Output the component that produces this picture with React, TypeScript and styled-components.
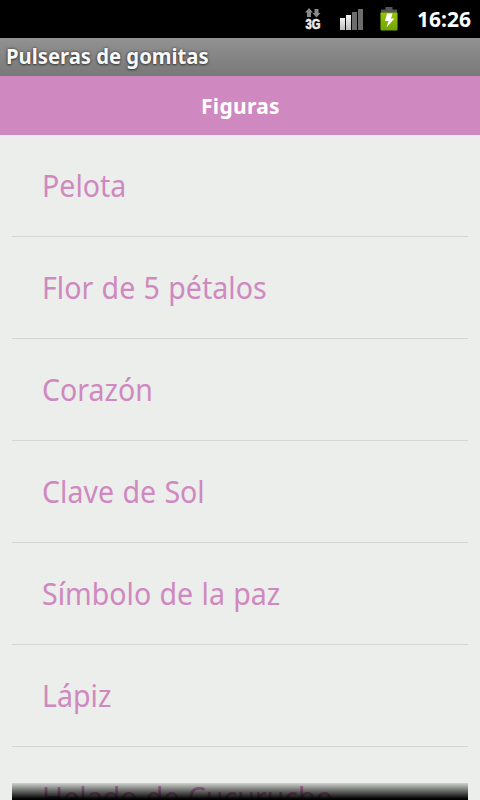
import React from "react";
import styled, { createGlobalStyle } from "styled-components";

const Global = createGlobalStyle`
  body { margin: 0; overflow: hidden; font-family: "Noto Sans", sans-serif; }
`;
const Screen = styled.main`
  position: relative; width: 480px; height: 800px; overflow: hidden; background: #ebeeea;
`;
const StatusBar = styled.div`
  height: 38px; background: #000; display: flex; align-items: center; justify-content: flex-end;
`;
const StatusIcons = styled.svg`
  width: 100px; height: 38px; display: block;
`;
const Clock = styled.time`
  color: #fff; font-size: 21px; font-weight: 700; line-height: 38px; width: 54px; margin: 0 9px 0 17px; white-space: nowrap;
`;
const TitleBar = styled.div`
  height: 38px; line-height: 37px; padding-left: 6px; box-sizing: border-box; font-size: 21px; font-weight: 700; color: #f8f8f8;
  background: linear-gradient(#929292, #787878); text-shadow: 0 0 3px #333, 0 1px 2px #444; white-space: nowrap;
`;
const Label = styled.span<{ $squeeze: number }>`
  display: inline-block; transform: scaleX(${(p) => p.$squeeze}); transform-origin: left center;
`;
const Heading = styled.h1`
  height: 59px; margin: 0; padding-left: 1px; background: #d088c0; color: #fff; font-size: 21px; line-height: 60px; text-align: center;
  letter-spacing: 0.3px;
`;
const List = styled.ul`
  list-style: none; margin: 0; padding: 0 12px;
`;
const Row = styled.li`
  height: 102px; box-sizing: border-box; border-bottom: 1px solid #d3d6d3; padding-left: 30px; line-height: 100px;
  font-size: 31px; color: #d088c0; white-space: nowrap; word-spacing: 1px;
`;
const Fade = styled.div`
  position: absolute; left: 12px; right: 12px; bottom: 0; height: 17px;
  background: linear-gradient(rgba(0, 0, 0, 0.12), #000 94%);
`;
const items = ["Pelota", "Flor de 5 pétalos", "Corazón", "Clave de Sol", "Símbolo de la paz", "Lápiz", "Helado de Cucurucho"];

function Indicators() {
  return (
    <StatusIcons viewBox="300 0 100 38" aria-hidden="true">
      <defs>
        <linearGradient id="cell" x1="0" y1="0" x2="0" y2="1">
          <stop offset="0" stopColor="#f2f2f2" />
          <stop offset="1" stopColor="#bdbdbd" />
        </linearGradient>
        <linearGradient id="charge" x1="0" y1="0" x2="0" y2="1">
          <stop offset="0" stopColor="#94c800" />
          <stop offset="1" stopColor="#71a300" />
        </linearGradient>
      </defs>
      <path d="M309 8l4 4.5h-2V17h-4v-4.5h-2z" fill="#8a8a8a" />
      <path d="M316.5 17.5l-4-4.5h2V9h4v4h2z" fill="#8a8a8a" />
      <text x="305.5" y="29" fill="#eee" fontFamily="Liberation Sans, sans-serif" fontWeight="700" fontSize="14" textLength="15" lengthAdjust="spacingAndGlyphs" stroke="#eee" strokeWidth="0.6">3G</text>
      <rect x="340" y="18" width="5" height="12" fill="url(#cell)" />
      <rect x="346" y="15" width="5" height="15" fill="url(#cell)" />
      <rect x="352" y="12" width="5" height="18" fill="#6c6c6c" />
      <rect x="358" y="9" width="5" height="21" fill="#6c6c6c" />
      <path d="M381 12.7V9.5h4.5V7h7v2.5h4.5v3.2z" fill="#555" />
      <rect x="380.5" y="12.5" width="17" height="18" rx="0.8" fill="url(#charge)" />
      <path d="M387 13.5h5.5l-1.5 5h3.5L386.5 27.5l2-6.5h-3.5z" fill="#fff" />
    </StatusIcons>
  );
}

export default function App() {
  return (
    <Screen>
      <Global />
      <StatusBar><Indicators /><Clock>16:26</Clock></StatusBar>
      <TitleBar><Label $squeeze={0.964}>Pulseras de gomitas</Label></TitleBar>
      <Heading>Figuras</Heading>
      <List>{items.map((t) => <Row key={t}><Label $squeeze={0.921}>{t}</Label></Row>)}</List>
      <Fade />
    </Screen>
  );
}
